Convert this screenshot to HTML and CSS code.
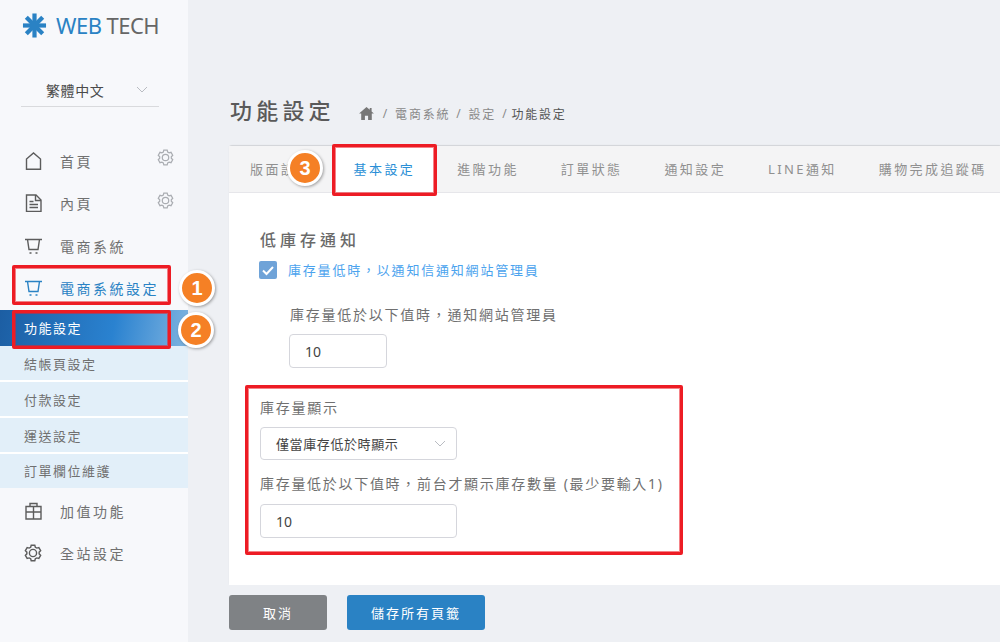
FILE: index.html
```html
<!DOCTYPE html>
<html lang="zh-Hant">
<head>
<meta charset="utf-8">
<title>功能設定</title>
<link rel="stylesheet" href="styles.css">
</head>
<body>
<div class="app">
  <aside class="sidebar">
    <div class="logo">
      <svg class="logo-mark" viewBox="0 0 26 26"><g stroke="#2a82c4" stroke-width="4.400"><path d="M13 .5v25"/><path d="M1 13h24"/><path d="M4.500 4.500l17 17"/><path d="M21.500 4.500l-17 17"/></g></svg>
      <span class="logo-web">WEB</span><span class="logo-tech">TECH</span>
    </div>
    <div class="lang"><span>繁體中文</span><svg class="chev" viewBox="0 0 12 7"><path d="M1 1l5 5 5-5"/></svg></div>
    <nav class="nav">
      <a class="nav-item"><svg class="ico" viewBox="0 0 18 18"><path d="M2.500 17.200V7l7-6 7 6v10.200z"/></svg><span class="nav-text">首頁</span><svg class="gear" viewBox="0 0 18 18"><path d="M7.200 1.210h3.600l.52 2.040 1.500.86 2.030-.57 1.800 3.120-1.510 1.480v1.720l1.510 1.480-1.800 3.120-2.030-.57-1.500.86-.52 2.040H7.200l-.52-2.040-1.500-.86-2.030.57-1.800-3.120 1.510-1.480V8.140L1.350 6.660l1.800-3.120 2.030.57 1.500-.86z"/><circle cx="9" cy="9" r="3.400"/></svg></a>
      <a class="nav-item"><svg class="ico" viewBox="0 0 18 18"><path d="M2.500 1h9.500l5 5v11.500H2.500z"/><path d="M11.500 1v5.500H17M5.500 7.500h4M5.500 10.500h8.500M5.500 13.500h8.500"/></svg><span class="nav-text">內頁</span><svg class="gear" viewBox="0 0 18 18"><path d="M7.200 1.210h3.600l.52 2.040 1.500.86 2.030-.57 1.800 3.120-1.510 1.480v1.720l1.510 1.480-1.800 3.120-2.030-.57-1.500.86-.52 2.040H7.200l-.52-2.040-1.500-.86-2.030.57-1.800-3.120 1.510-1.480V8.140L1.350 6.660l1.800-3.120 2.030.57 1.500-.86z"/><circle cx="9" cy="9" r="3.400"/></svg></a>
      <a class="nav-item"><svg class="ico" viewBox="0 0 18 18"><path d="M1 2.500h17M3.500 2.500l1.500 10h9l1.500-10"/><path d="M5.500 16h2M11.500 16h2"/></svg><span class="nav-text">電商系統</span></a>
      <a class="nav-item nav-current"><svg class="ico" viewBox="0 0 18 18"><path d="M1 2.500h17M3.500 2.500l1.500 10h9l1.500-10"/><path d="M5.500 16h2M11.500 16h2"/></svg><span class="nav-text">電商系統設定</span></a>
      <ul class="subnav">
        <li class="sub-item sub-active">功能設定</li>
        <li class="sub-item">結帳頁設定</li>
        <li class="sub-item">付款設定</li>
        <li class="sub-item">運送設定</li>
        <li class="sub-item">訂單欄位維護</li>
      </ul>
      <a class="nav-item"><svg class="ico" viewBox="0 0 18 18"><path d="M6 4.500V1.500h7v3"/><path d="M2 4.500h15v12.500H2zM9.500 4.500V17M2 10h15"/></svg><span class="nav-text">加值功能</span></a>
      <a class="nav-item"><svg class="ico" viewBox="0 0 18 18"><path d="M7.200 1.210h3.600l.52 2.040 1.500.86 2.030-.57 1.800 3.120-1.510 1.480v1.720l1.510 1.480-1.800 3.120-2.030-.57-1.500.86-.52 2.040H7.200l-.52-2.040-1.500-.86-2.030.57-1.800-3.120 1.510-1.480V8.140L1.350 6.660l1.800-3.120 2.030.57 1.500-.86z"/><circle cx="9" cy="9" r="3.600"/></svg><span class="nav-text">全站設定</span></a>
    </nav>
  </aside>

  <main class="main">
    <header class="page-head">
      <h1 class="page-title">功能設定</h1>
      <div class="crumbs">
        <svg class="home" viewBox="0 0 16 14"><path d="M8 0L0 7h2.300v7h4V9.500h3.400V14h4V7H16l-2.500-2.200V1h-2v2z"/></svg>
        <span>/</span><span>電商系統</span><span>/</span><span>設定</span><span>/</span><span class="crumb-now">功能設定</span>
      </div>
    </header>

    <section class="card">
      <div class="tabs">
        <span class="tab">版面設定</span>
        <span class="tab tab-active">基本設定</span>
        <span class="tab">進階功能</span>
        <span class="tab">訂單狀態</span>
        <span class="tab">通知設定</span>
        <span class="tab">LINE通知</span>
        <span class="tab">購物完成追蹤碼</span>
      </div>
      <div class="card-body">
        <h2 class="section-title">低庫存通知</h2>
        <label class="check-row">
          <span class="checkbox"><svg viewBox="0 0 18 18"><path d="M4 9.500l3.500 3.500L14 6"/></svg></span>
          <span class="check-label">庫存量低時，以通知信通知網站管理員</span>
        </label>
        <div class="field-indent">
          <div class="field-label">庫存量低於以下值時，通知網站管理員</div>
          <div class="input input-small">10</div>
        </div>
        <div class="group">
          <div class="field-label">庫存量顯示</div>
          <div class="input input-wide select-box"><span>僅當庫存低於時顯示</span><svg class="chev" viewBox="0 0 12 7"><path d="M1 1l5 5 5-5"/></svg></div>
          <div class="field-label label-second">庫存量低於以下值時，前台才顯示庫存數量 (最少要輸入1)</div>
          <div class="input input-wide input-last">10</div>
        </div>
      </div>
    </section>

    <footer class="actions">
      <button class="btn btn-cancel">取消</button>
      <button class="btn btn-save">儲存所有頁籤</button>
    </footer>
  </main>

  <div class="mark mark-nav"></div>
  <div class="mark mark-sub"></div>
  <div class="mark mark-tab"></div>
  <div class="mark mark-group"></div>
  <div class="badge badge-1">1</div>
  <div class="badge badge-2">2</div>
  <div class="badge badge-3">3</div>
</div>
</body>
</html>
```
FILE: styles.css
```css
* { box-sizing: border-box; }
html, body { margin: 0; padding: 0; height: 100%; }
body {
  font-family: "Noto Sans", "Noto Sans CJK TC", sans-serif;
  color: #5f6368;
  background: #eef0f4;
  overflow: hidden;
}
.app { position: relative; display: flex; width: 1000px; height: 642px; overflow: hidden; }

/* Sidebar */
.sidebar { flex: 0 0 188px; background: #f7f8fb; }
.logo { display: flex; align-items: center; height: 26px; margin: 12px 0 0 22px; font-size: 22px; line-height: 26px; letter-spacing: -.5px; }
.logo-mark { width: 25px; height: 25px; margin-right: 9px; }
.logo-web { color: #2a82c4; margin-right: 5px; }
.logo-tech { color: #666; }
.lang {
  display: flex; align-items: center; justify-content: space-between;
  width: 138px; height: 34px; margin: 35px 0 0 21px; padding: 0 11px 0 25px;
  border-bottom: 1px solid #d9dadd; font-size: 14px; color: #4a4a4a; letter-spacing: .6px;
}
.chev { width: 12px; height: 7px; fill: none; stroke: #b9bcc2; stroke-width: 1; }
.nav { margin-top: 32.250px; }
.nav-item { display: flex; align-items: center; height: 42.500px; padding-left: 24px; font-size: 14px; letter-spacing: 2.500px; color: #707070; }
.ico { width: 18px; height: 18px; flex: none; fill: none; stroke: #5c5c5c; stroke-width: 1.400; }
.nav-text { margin-left: 18px; }
.gear { width: 17px; height: 17px; margin-left: auto; margin-right: 14px; margin-top: -6px; fill: none; stroke: #aaadb2; stroke-width: 1.300; }
.nav-current { color: #2a82c4; }
.nav-current .ico { stroke: #2a82c4; }
.subnav { list-style: none; margin: .500px 0 1.750px; padding: 0; }
.sub-item {
  height: 36px; padding-left: 24px; line-height: 36px; font-size: 13px; letter-spacing: 1.500px;
  color: #707070; background: #e2eff9; border-bottom: 2px solid #fff;
}
.sub-item:last-child { border-bottom: 0; height: 34px; line-height: 34px; }
.sub-active { height: 36px; color: #fff; border-bottom: 0; background: linear-gradient(100deg, #1c5ea3 0%, #2a82d0 60%, #7fb4e0 100%); line-height: 36px; }

/* Main */
.main { flex: 1; display: flex; flex-direction: column; padding: 0 0 0 41px; min-width: 0; }
.page-head { display: flex; align-items: center; height: 40px; margin-top: 90px; }
.page-title { margin: 0 0 0 1px; font-size: 22px; line-height: 40px; font-weight: 500; letter-spacing: 4.200px; color: #5a5a5a; }
.crumbs { display: flex; align-items: center; gap: 6px; margin-left: 24px; margin-top: 7px; font-size: 12px; letter-spacing: 1.800px; color: #8a8a8a; }
.home { width: 15px; height: 13px; fill: #777; margin-right: 3px; }
.crumb-now { color: #555; margin-left: -3px; }
.card { flex: none; height: 439px; margin-top: 16px; background: #fff; box-shadow: 0 -1px 1px rgba(0,0,0,.12); border-radius: 3px 0 0 0; }
.tabs { display: flex; height: 47px; background: #f4f4f5; border-bottom: 1px solid #e6e6ea; }
.tab { padding: 0 21px; line-height: 46px; font-size: 13px; letter-spacing: 2.400px; color: #909090; white-space: nowrap; }
.tab-active { background: #fff; color: #2a8fd6; }
.card-body { padding: 35px 0 0 31px; }
.section-title { margin: 0; font-size: 16px; line-height: 24px; font-weight: 500; letter-spacing: 4px; color: #6a6a6a; }
.check-row { display: flex; align-items: center; gap: 11px; height: 18px; margin-top: 8px; margin-left: -1px; }
.checkbox { width: 18px; height: 18px; margin-top: 2px; border-radius: 2px; background: #6fa3d8; }
.checkbox svg { display: block; fill: none; stroke: #fff; stroke-width: 2; }
.check-label { font-size: 13px; letter-spacing: 1.800px; color: #4ba3ee; }
.field-indent { margin: 26px 0 0 30px; }
.field-label { font-size: 14px; line-height: 22px; letter-spacing: 1.750px; color: #707070; white-space: nowrap; }
.input {
  display: flex; align-items: center; height: 34px; margin-top: 8px; padding-left: 15px;
  background: #fff; border: 1px solid #d5d6dc; border-radius: 4px; font-size: 14px; color: #444;
}
.input-small { width: 98px; margin-left: -1px; }
.input-wide { width: 197px; }
.input-last { margin-top: 9px; }
.select-box { justify-content: space-between; padding-right: 10px; height: 33px; margin-top: 8px; font-size: 13px; letter-spacing: .6px; }
.group { margin-top: 29px; }
.label-second { margin-top: 13px; letter-spacing: 1.700px; }

.actions { display: flex; gap: 20px; margin-top: 10px; }
.btn { height: 35px; border: 0; border-radius: 3px; font-family: inherit; font-size: 13px; letter-spacing: 2px; color: #fff; }
.btn-cancel { width: 98px; background: #7f8285; }
.btn-save { width: 138px; background: #2a82c4; }

/* Annotation overlays */
.mark { position: absolute; border: 3px solid #ed1c24; border-radius: 2px; box-shadow: inset 0 0 0 1px rgba(237,28,36,.55); }
.mark-nav { left: 12px; top: 265px; width: 159px; height: 40px; }
.mark-sub { left: 12px; top: 310px; width: 159px; height: 39px; }
.mark-tab { left: 332px; top: 144px; width: 105px; height: 52px; }
.mark-group { left: 245px; top: 385px; width: 438px; height: 170px; }
.badge {
  position: absolute; width: 36px; height: 36px; border-radius: 50%;
  background: #f58025; border: 3px solid #fff; box-shadow: 1px 1px 3px rgba(0,0,0,.35);
  color: #fff; font-family: "Liberation Sans", sans-serif; font-weight: 700; font-size: 20px; line-height: 30px; text-align: center;
}
.badge-1 { left: 179px; top: 270px; }
.badge-2 { left: 178px; top: 312px; }
.badge-3 { left: 287px; top: 150px; }
```
